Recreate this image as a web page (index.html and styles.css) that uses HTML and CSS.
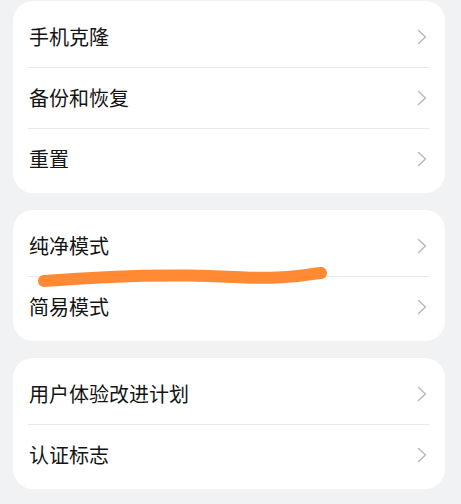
FILE: index.html
```html
<!DOCTYPE html>
<html lang="zh">
<head>
<meta charset="utf-8">
<link rel="stylesheet" href="styles.css">
</head>
<body>
<div class="page">
  <div class="card">
    <div class="row"><span class="label">手机克隆</span><svg class="chev" viewBox="0 0 10 16"><path d="M1.5 1.5 L8.5 8 L1.5 14.5"/></svg></div>
    <div class="row"><span class="label">备份和恢复</span><svg class="chev" viewBox="0 0 10 16"><path d="M1.5 1.5 L8.5 8 L1.5 14.5"/></svg></div>
    <div class="row"><span class="label">重置</span><svg class="chev" viewBox="0 0 10 16"><path d="M1.5 1.5 L8.5 8 L1.5 14.5"/></svg></div>
  </div>
  <div class="card marked">
    <div class="row"><span class="label">纯净模式</span><svg class="chev" viewBox="0 0 10 16"><path d="M1.5 1.5 L8.5 8 L1.5 14.5"/></svg></div>
    <div class="row"><span class="label">简易模式</span><svg class="chev" viewBox="0 0 10 16"><path d="M1.5 1.5 L8.5 8 L1.5 14.5"/></svg></div>
    <svg class="scribble" viewBox="0 0 432 132" width="432" height="132"><path d="M31 71 C 80 67, 130 65, 175 65.5 S 235 69, 265 67.5 S 295 64, 308 63"/></svg>
  </div>
  <div class="card">
    <div class="row"><span class="label">用户体验改进计划</span><svg class="chev" viewBox="0 0 10 16"><path d="M1.5 1.5 L8.5 8 L1.5 14.5"/></svg></div>
    <div class="row"><span class="label">认证标志</span><svg class="chev" viewBox="0 0 10 16"><path d="M1.5 1.5 L8.5 8 L1.5 14.5"/></svg></div>
  </div>
</div>
</body>
</html>
```

FILE: styles.css
```css
html, body {
  margin: 0;
  padding: 0;
  background: #f1f2f4;
}
body {
  font-family: "Noto Sans CJK SC", "Noto Sans", sans-serif;
  color: #141414;
}
.page {
  display: flex;
  flex-direction: column;
  gap: 17px;
  padding: 1px 16px 0 13px;
}
.card {
  background: #ffffff;
  border-radius: 20px;
  padding: 6px 15px 4px 15px;
}
.marked {
  position: relative;
}
.row {
  height: 60px;
  display: flex;
  align-items: center;
  justify-content: space-between;
  padding: 0 3px 0 1px;
}
.row + .row {
  border-top: 1px solid #e9e9ea;
}
.label {
  font-size: 20px;
  line-height: 1;
  letter-spacing: 0;
}
.chev {
  width: 10px;
  height: 16px;
  fill: none;
  stroke: #b9b9bb;
  stroke-width: 1.5;
  stroke-linecap: round;
  stroke-linejoin: round;
}
.scribble {
  position: absolute;
  left: 0;
  top: 0;
  fill: none;
  stroke: #ff8a33;
  stroke-width: 12;
  stroke-linecap: round;
  stroke-linejoin: round;
}
```
